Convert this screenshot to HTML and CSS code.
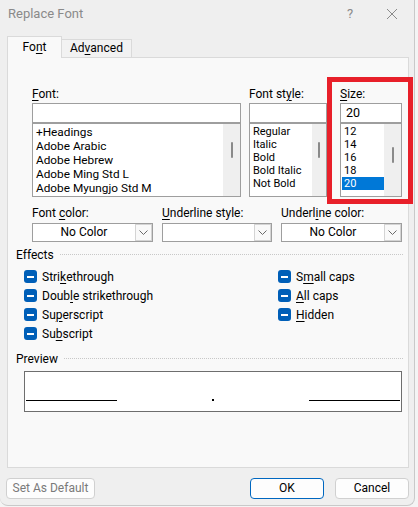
FILE: index.html
```html
<!DOCTYPE html>
<html lang="en">
<head>
<meta charset="utf-8">
<title>Replace Font</title>
<link rel="stylesheet" href="styles.css">
</head>
<body>
<div class="dialog">
  <div class="titlebar">
    <span class="title">Replace Font</span>
    <span class="help">?</span>
    <svg class="close" width="12" height="12" viewBox="0 0 12 12"><path d="M1 1L11 11M11 1L1 11" stroke="#8a8a8a" stroke-width="1" fill="none"/></svg>
  </div>
  <div class="tabs">
    <div class="tab active">Fo<u>n</u>t</div>
    <div class="tab">Ad<u>v</u>anced</div>
  </div>
  <div class="panel">
    <div class="font-grid">
      <div class="col">
        <div class="lbl"><u>F</u>ont:</div>
        <div class="input"></div>
        <div class="listbox rows14">
          <ul class="items">
            <li>+Headings</li>
            <li>Adobe Arabic</li>
            <li>Adobe Hebrew</li>
            <li>Adobe Ming Std L</li>
            <li>Adobe Myungjo Std M</li>
          </ul>
          <div class="scroll"><span class="thumb t-font"></span></div>
        </div>
      </div>
      <div class="col">
        <div class="lbl">Font st<u>y</u>le:</div>
        <div class="input"></div>
        <div class="listbox rows13">
          <ul class="items">
            <li>Regular</li>
            <li>Italic</li>
            <li>Bold</li>
            <li>Bold Italic</li>
            <li>Not Bold</li>
          </ul>
          <div class="scroll narrow"><span class="thumb t-style"></span></div>
        </div>
      </div>
      <div class="col">
        <div class="lbl"><u>S</u>ize:</div>
        <div class="input"><span class="val">20</span></div>
        <div class="listbox rows13">
          <ul class="items">
            <li>12</li>
            <li>14</li>
            <li>16</li>
            <li>18</li>
            <li class="sel">20</li>
          </ul>
          <div class="scroll"><span class="thumb t-size"></span></div>
        </div>
      </div>
    </div>

    <div class="combo-grid">
      <div class="col">
        <div class="lbl">Font <u>c</u>olor:</div>
        <div class="combo"><span class="ctext">No Color</span><span class="drop"><svg width="9" height="5" viewBox="0 0 9 5"><path d="M0.5 0.5L4.5 4.5L8.5 0.5" stroke="#6a6a6a" fill="none"/></svg></span></div>
      </div>
      <div class="col">
        <div class="lbl"><u>U</u>nderline style:</div>
        <div class="combo"><span class="ctext"></span><span class="drop"><svg width="9" height="5" viewBox="0 0 9 5"><path d="M0.5 0.5L4.5 4.5L8.5 0.5" stroke="#6a6a6a" fill="none"/></svg></span></div>
      </div>
      <div class="col">
        <div class="lbl">Underl<u>i</u>ne color:</div>
        <div class="combo"><span class="ctext">No Color</span><span class="drop"><svg width="9" height="5" viewBox="0 0 9 5"><path d="M0.5 0.5L4.5 4.5L8.5 0.5" stroke="#6a6a6a" fill="none"/></svg></span></div>
      </div>
    </div>

    <div class="group-title effects-title"><span>Effects</span><span class="rule"></span></div>
    <div class="effects">
      <div class="ecol left">
        <div class="check"><span class="box"></span>Stri<u>k</u>ethrough</div>
        <div class="check"><span class="box"></span>Doub<u>l</u>e strikethrough</div>
        <div class="check"><span class="box"></span>Su<u>p</u>erscript</div>
        <div class="check"><span class="box"></span>Su<u>b</u>script</div>
      </div>
      <div class="ecol right">
        <div class="check"><span class="box"></span>S<u>m</u>all caps</div>
        <div class="check"><span class="box"></span><u>A</u>ll caps</div>
        <div class="check"><span class="box"></span><u>H</u>idden</div>
      </div>
    </div>

    <div class="group-title preview-title"><span>Preview</span><span class="rule"></span></div>
    <div class="preview">
      <span class="pline"></span>
      <span class="pdot"></span>
      <span class="pline"></span>
    </div>
  </div>

  <div class="buttons">
    <div class="btn disabled wide">Set As Default</div>
    <div class="btn-group">
      <div class="btn default">OK</div>
      <div class="btn">Cancel</div>
    </div>
  </div>

  <div class="highlight-frame"></div>
</div>
</body>
</html>
```

FILE: styles.css
```css
* { box-sizing: border-box; }
html, body { margin: 0; padding: 0; }
body {
  background: #f4f4f4;
  font-family: Roboto, "Noto Sans", "Liberation Sans", sans-serif;
  font-size: 12px;
  color: #000;
  width: 418px;
  height: 507px;
  overflow: hidden;
}
u { text-decoration: underline; text-underline-offset: 2px; text-decoration-thickness: 1px; }

.dialog {
  position: relative;
  width: 415px;
  height: 506px;
  background: #efefef;
  border-right: 1px solid #c9c9c9;
  border-bottom: 1px solid #c9c9c9;
  border-radius: 0 0 8px 8px;
}

.titlebar {
  height: 36px;
  display: flex;
  align-items: flex-start;
  padding-left: 8px;
}
.title {
  line-height: 28px;
  font-size: 13px;
  color: #8a8a8a;
  flex: 1;
}
.help {
  line-height: 28px;
  font-size: 13px;
  color: #8a8a8a;
  width: 39px;
}
.close { margin-top: 8px; margin-right: 16px; }

.tabs {
  display: flex;
  align-items: flex-end;
  height: 21px;
  padding-left: 7px;
}
.tab {
  height: 18px;
  line-height: 17px;
  padding: 0 8px;
  border: 1px solid #dadada;
  border-bottom: none;
  border-left: none;
  background: #f2f2f2;
}
.tab.active {
  position: relative;
  z-index: 1;
  height: 22px;
  margin-bottom: -1px;
  width: 55px;
  text-align: center;
  line-height: 20px;
  border-left: 1px solid #dadada;
  background: #f9f9f9;
  padding: 0;
}

.panel {
  margin-left: 7px;
  width: 402px;
  height: 411px;
  background: #f9f9f9;
  border: 1px solid #dadada;
  padding: 28px 5px 0 24px;
}

.lbl {
  height: 17px;
  line-height: 17px;
  white-space: nowrap;
}

.font-grid {
  display: grid;
  grid-template-columns: 209px 86px 75px;
}
.font-grid .col:nth-child(2) { margin-left: 8px; }
.font-grid .col:nth-child(3) { margin-left: 13px; }

.input {
  height: 20px;
  border: 1px solid #9e9e9e;
  background: #fff;
  padding-left: 5px;
  line-height: 18px;
}
.input .val { font-size: 12.5px; }

.listbox {
  height: 74px;
  border: 1px solid #9e9e9e;
  background: #fff;
  display: flex;
}
.items {
  list-style: none;
  margin: 0;
  padding: 1px 0 0 1px;
  flex: 1;
}
.items li {
  padding-left: 2px;
  white-space: nowrap;
}
.rows14 .items li { height: 14px; line-height: 14px; font-size: 11.8px; }
.rows13 .items li { height: 13px; line-height: 13px; font-size: 11px; }
.items li.sel { background: #0078d7; color: #fff; }

.scroll {
  width: 17px;
  background: #efefef;
  display: flex;
  justify-content: center;
}
.scroll.narrow { width: 14px; }
.thumb {
  width: 2px;
  height: 16px;
  background: #8a8a8a;
  border-radius: 1px;
}
.t-font { margin-top: 18px; }
.t-style { margin-top: 18px; }
.t-size { margin-top: 23px; }

.combo-grid {
  display: grid;
  grid-template-columns: 121px 110px 121px;
  column-gap: 9px;
  margin-top: 8px;
}
.combo {
  margin-top: 1px;
  height: 19px;
  border: 1px solid #9e9e9e;
  background: #fff;
  display: flex;
}
.ctext {
  flex: 1;
  text-align: center;
  line-height: 17px;
}
.drop {
  width: 17px;
  border: 1px solid #d4d4d4;
  background: #f9f9f9;
  display: flex;
  align-items: center;
  justify-content: center;
}

.group-title {
  display: flex;
  align-items: center;
  height: 17px;
  margin-left: -16px;
}
.group-title .rule {
  flex: 1;
  border-top: 1px dotted #c8c8c8;
  margin-left: 6px;
}
.effects-title { margin-top: 4px; }

.effects {
  display: grid;
  grid-template-columns: 254px 1fr;
  margin-top: 4px;
  margin-left: -8px;
}
.check {
  height: 19px;
  display: flex;
  align-items: center;
  white-space: nowrap;
}
.box {
  width: 13px;
  height: 13px;
  border-radius: 3px;
  background: #005fb8;
  margin-right: 5px;
  display: flex;
  align-items: center;
  justify-content: center;
}
.box::after {
  content: "";
  width: 7px;
  height: 2px;
  background: #fff;
}

.preview-title { margin-top: 7px; }
.preview {
  margin-top: 4px;
  margin-left: -8px;
  width: 378px;
  height: 41px;
  border: 1px solid #6e6e6e;
  background: #fff;
  display: flex;
  align-items: flex-end;
  justify-content: space-between;
  padding: 0 1px 10px 1px;
}
.pline {
  width: 91px;
  height: 1px;
  background: #000;
}
.pdot {
  width: 2px;
  height: 2px;
  background: #000;
}

.buttons {
  display: flex;
  justify-content: space-between;
  margin-top: 10px;
  padding: 0 5px 0 6px;
}
.btn-group { display: flex; gap: 11px; }
.btn {
  width: 74px;
  height: 21px;
  border: 1px solid #d0d0d0;
  border-radius: 4px;
  background: #fdfdfd;
  text-align: center;
  line-height: 19px;
}
.btn.wide { width: 89px; }
.btn.disabled { color: #7a7a7a; }
.btn.default { border-color: #0067c0; }

.highlight-frame {
  position: absolute;
  left: 327px;
  top: 77px;
  width: 86px;
  height: 127px;
  border: 5px solid #e8202a;
}
```
